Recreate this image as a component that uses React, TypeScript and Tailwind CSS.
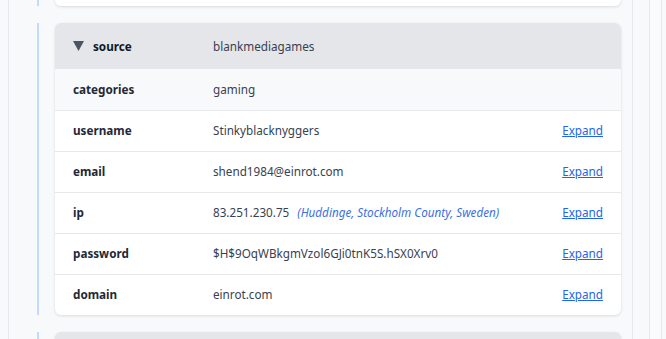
import React from "react";

type Row = { label: string; value: string; extra?: string; expand?: boolean };

const rows: Row[] = [
  { label: "categories", value: "gaming" },
  { label: "username", value: "Stinkyblacknyggers", expand: true },
  { label: "email", value: "shend1984@einrot.com", expand: true },
  {
    label: "ip",
    value: "83.251.230.75",
    extra: "(Huddinge, Stockholm County, Sweden)",
    expand: true,
  },
  { label: "password", value: "$H$9OqWBkgmVzol6GJi0tnK5S.hSX0Xrv0", expand: true },
  { label: "domain", value: "einrot.com", expand: true },
];

const App = () => {
  return (
    <div
      className="h-[339px] overflow-hidden bg-[#f8f9fb] flex text-[11.7px] text-[#1f2937]"
      style={{ fontFamily: '"Noto Sans", "Open Sans", sans-serif' }}
    >
      {/* Main column */}
      <div className="ml-2 w-[625px] border-x border-[#e6e8eb] pl-[28px] pr-[11px] flex flex-col gap-[17px]">
        {/* Previous card (cut off) */}
        <div className="border-l-2 border-[#c3dafe] pl-4 -mt-[34px]">
          <div className="h-[40px] bg-white rounded-md shadow-[0_1px_3px_rgba(0,0,0,0.12)]" />
        </div>

        {/* Source card */}
        <div className="border-l-2 border-[#c3dafe] pl-4">
          <div className="bg-white rounded-md shadow-[0_1px_3px_rgba(0,0,0,0.12)] overflow-hidden">
            <div className="h-[46px] bg-[#e4e6e9] flex items-center px-[18px] pt-px">
              <div className="w-[140px] flex items-center gap-[9px]">
                <svg width="11" height="10" viewBox="0 0 11 10" className="text-[#4b5563]">
                  <polygon points="0,0 11,0 5.5,10" fill="currentColor" />
                </svg>
                <span className="font-bold text-[#111827]">source</span>
              </div>
              <span className="text-[#374151]">blankmediagames</span>
            </div>
            {rows.map((r, i) => (
              <div
                key={r.label}
                className={`h-[41px] flex items-center px-[18px] ${
                  i === 0 ? "bg-[#f8f9fb]" : "border-t border-[#e6e8eb]"
                }`}
              >
                <span className="w-[140px] font-bold text-[#1f2937]">{r.label}</span>
                <span className="flex-1 text-[#374151]">
                  {r.value}
                  {r.extra && (
                    <span className="ml-2 italic text-[#3b6fe0]">{r.extra}</span>
                  )}
                </span>
                {r.expand && (
                  <a className="text-[#2563eb] underline cursor-pointer">Expand</a>
                )}
              </div>
            ))}
          </div>
        </div>

        {/* Next card (cut off) */}
        <div className="border-l-2 border-[#c3dafe] pl-4">
          <div className="h-[46px] bg-[#e4e6e9] rounded-md shadow-[0_1px_3px_rgba(0,0,0,0.12)]" />
        </div>
      </div>

      {/* Right strips */}
      <div className="w-[17px] border-r border-[#e6e8eb]" />
      <div className="w-[12px] border-r border-[#e6e8eb] bg-[#fafbfc]" />
    </div>
  );
};

export default App;
